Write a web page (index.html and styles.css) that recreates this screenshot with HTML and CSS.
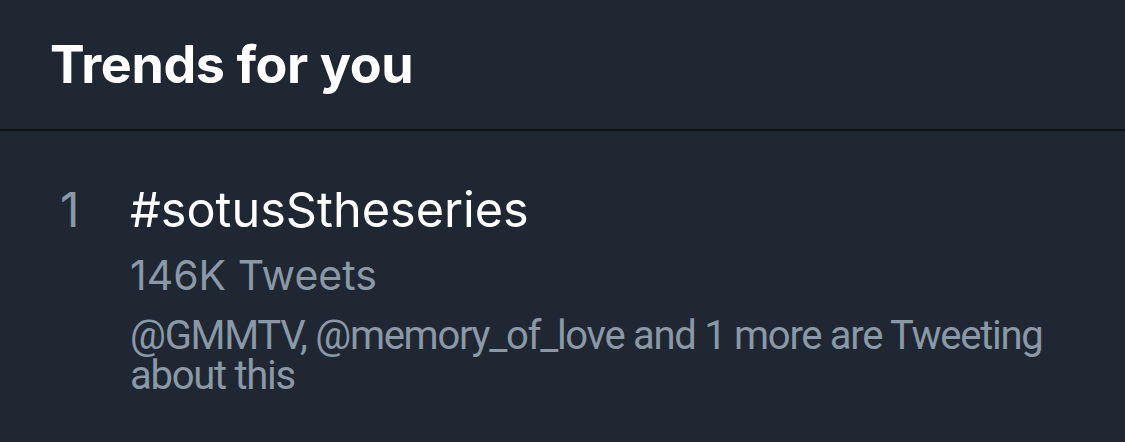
FILE: index.html
```html
<!DOCTYPE html>
<html>
<head>
<meta charset="utf-8">
<link rel="stylesheet" href="styles.css">
</head>
<body>
<div class="panel">
  <div class="header"><h1 class="title">Trends for you</h1></div>
  <div class="trend">
    <div class="rank">1</div>
    <div class="info">
      <div class="name">#sotusStheseries</div>
      <div class="count">146K Tweets</div>
      <div class="desc">@GMMTV, @memory_of_love and 1 more are Tweeting about this</div>
    </div>
  </div>
</div>
</body>
</html>
```
FILE: styles.css
```css
html, body {
  margin: 0;
  padding: 0;
  background: #1f2733;
}
body {
  width: 1125px;
  height: 442px;
  overflow: hidden;
  font-family: Inter, "Noto Sans", sans-serif;
}
.panel {
  display: flex;
  flex-direction: column;
}
.header {
  height: 129px;
  display: flex;
  align-items: center;
  padding-left: 50px;
  border-bottom: 2px solid #0e1218;
}
.title {
  margin: 0;
  color: #ffffff;
  font-size: 52px;
  font-weight: 700;
  letter-spacing: -0.4px;
}
.trend {
  display: flex;
  padding: 49px 60px 0 60px;
}
.rank {
  width: 70px;
  color: #8b98a5;
  font-size: 48px;
  line-height: 60px;
}
.info {
  display: flex;
  flex-direction: column;
  width: 935px;
}
.name {
  color: #ffffff;
  font-size: 48.6px;
  line-height: 60px;
}
.count {
  color: #8b98a5;
  font-size: 41px;
  line-height: 70px;
}
.desc {
  color: #8b98a5;
  font-family: Roboto, "Noto Sans", sans-serif;
  font-size: 40px;
  line-height: 40px;
  letter-spacing: -1.28px;
  margin-top: 6px;
}
```
